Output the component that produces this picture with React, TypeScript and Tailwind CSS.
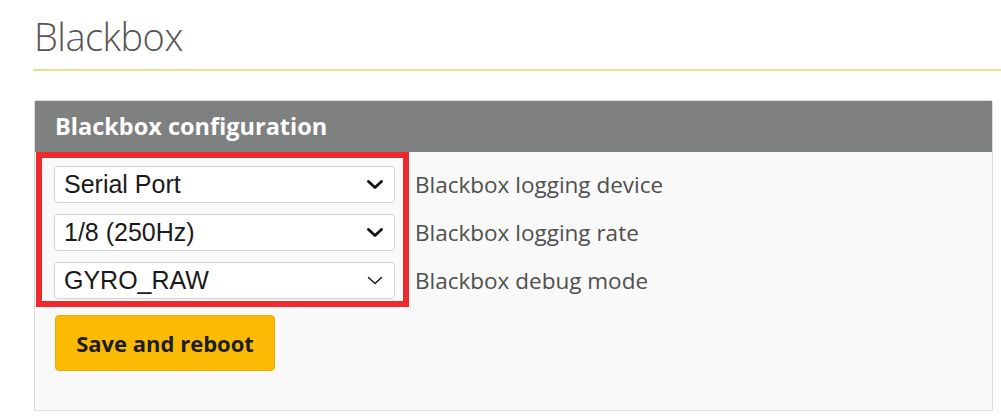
import React from "react";

const rows = [
  { value: "Serial Port", label: "Blackbox logging device", bold: true },
  { value: "1/8 (250Hz)", label: "Blackbox logging rate", bold: true },
  { value: "GYRO_RAW", label: "Blackbox debug mode", bold: false },
];

function Chevron({ bold }: { bold: boolean }) {
  return (
    <svg width="16" height="9" viewBox="0 0 16 9" fill="none" className="shrink-0">
      <polyline
        points="1.5,1.5 8,7.5 14.5,1.5"
        stroke="#111"
        strokeWidth={bold ? 2.8 : 1.4}
        strokeLinecap="round"
        strokeLinejoin="round"
      />
    </svg>
  );
}

export default function App() {
  return (
    <div className="w-[1001px] h-[420px] bg-white overflow-hidden font-['Open_Sans',sans-serif]">
      {/* Page title */}
      <div className="pl-[33px] pt-[12px]">
        <h1 className="pl-[1px] text-[38px] leading-[48px] font-light text-[#555] tracking-[-0.5px]">
          Blackbox
        </h1>
        <div className="mt-[9px] h-[2px] bg-[#e6df8c]" />
      </div>

      {/* Config panel */}
      <div className="ml-[34px] mr-[8px] mt-[29px] border border-[#dcdcdc] rounded-t-[3px] bg-[#f9f9f9] h-[311px]">
        <div className="h-[51px] bg-[#7f8180] flex items-center pl-[20px]">
          <span className="text-white font-bold text-[23.5px] leading-none">
            Blackbox configuration
          </span>
        </div>

        <div className="flex">
          <div className="ml-[1px] w-[373px] h-[155px] border-[6px] border-[#ee2a2e] pt-[8px] pl-[12px] pr-[8px] overflow-hidden flex flex-col gap-[11px]">
            {rows.map((r) => (
              <div
                key={r.value}
                className="h-[37px] shrink-0 bg-white border border-[#cfd3d3] rounded-[4px] flex items-center justify-between pl-[9px] pr-[11px]"
              >
                <span className="font-['Liberation_Sans',Arial,sans-serif] text-[25px] leading-none text-[#1a1a1a]">
                  {r.value}
                </span>
                <Chevron bold={r.bold} />
              </div>
            ))}
          </div>

          <div className="ml-[6px] pt-[14px] flex flex-col gap-[11px]">
            {rows.map((r) => (
              <div key={r.label} className="h-[37px] flex items-center text-[22.5px] text-[#4f4f4f]">
                {r.label}
              </div>
            ))}
          </div>
        </div>

        <button className="mt-[8px] ml-[20px] w-[220px] h-[56px] bg-[#fbbb05] border border-[#e9ab00] rounded-[4px] text-[22px] font-bold text-[#1c1c1c]">
          Save and reboot
        </button>
      </div>
    </div>
  );
}
